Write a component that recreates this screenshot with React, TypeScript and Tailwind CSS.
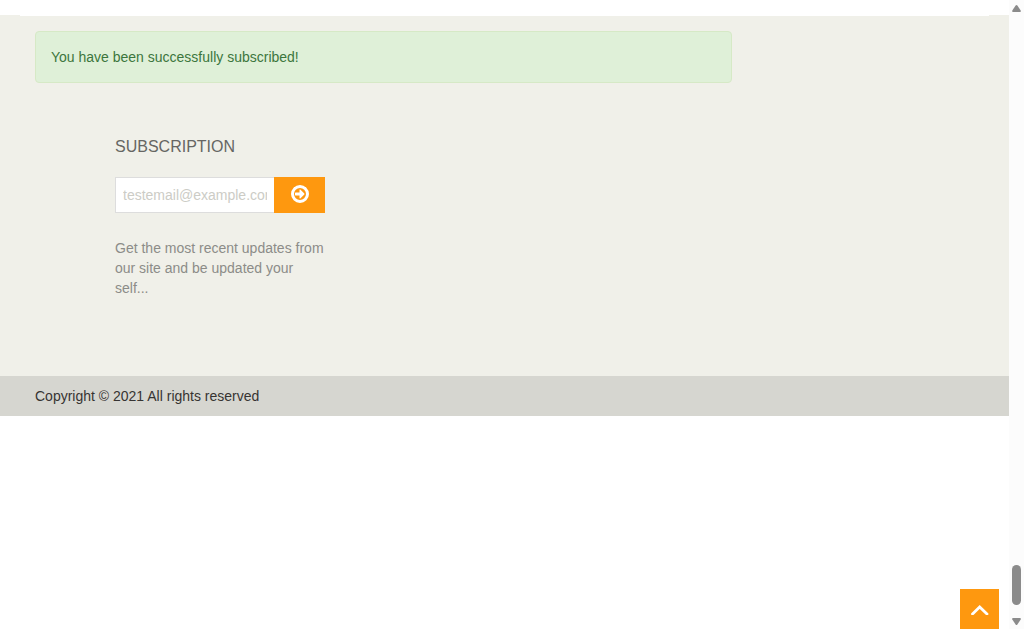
import React from "react";

function ArrowCircleIcon() {
  return (
    <svg viewBox="0 0 18 18" className="h-[18px] w-[18px]" fill="none" stroke="currentColor" aria-hidden="true">
      <circle cx="9" cy="9" r="7.5" strokeWidth="3" />
      <path d="M4.500 7.500H8.500V4.900c0-.5.5-.6.8-.3l4 3.900c.3.3.3.7 0 1l-4 3.900c-.3.3-.8.2-.8-.3V10.500H4.500c-.3 0-.5-.2-.5-.5V8c0-.3.2-.5.5-.5z" fill="currentColor" stroke="none" />
    </svg>
  );
}

function SubscriptionForm() {
  return (
    <section className="ml-20 mt-[54px] w-[210px]">
      <h2 className="text-base leading-5 text-[#666663]">SUBSCRIPTION</h2>
      <form className="mt-5 flex h-9" onSubmit={(e) => e.preventDefault()}>
        <input
          type="email"
          aria-label="Email address"
          placeholder="testemail@example.com"
          className="min-w-0 flex-1 border border-r-0 border-[#dddddd] bg-white px-[7px] text-sm text-[#555555] outline-none placeholder:text-[#ccccc6]"
        />
        <button
          type="submit"
          aria-label="Subscribe"
          className="flex w-[51px] items-center justify-center bg-[#fe980f] pb-0.5 text-white"
        >
          <ArrowCircleIcon />
        </button>
      </form>
      <p className="mt-[25px] text-sm leading-5 text-[#8c8c88]">
        Get the most recent updates from our site and be updated your self...
      </p>
    </section>
  );
}

function ScrollTrack() {
  return (
    <aside className="sticky top-0 flex h-screen w-[15px] shrink-0 flex-col items-center bg-[#fcfcfc] pb-1 pt-[5px] text-[#8b8b8b]" aria-hidden="true">
      <svg viewBox="0 0 9 7" className="h-[7px] w-[9px]" fill="currentColor">
        <path d="M3.6.5Q4.5-.5 5.4.5L8.7 5.5Q9.2 7 8 7H1Q-.2 7 .3 5.5Z" />
      </svg>
      <div className="mt-auto h-10 w-[9px] rounded-full bg-[#8b8b8b]" />
      <svg viewBox="0 0 9 7" className="mt-[13px] h-[7px] w-[9px]" fill="currentColor">
        <path d="M3.6 6.5Q4.5 7.5 5.4 6.5L8.7 1.5Q9.2 0 8 0H1Q-.2 0 .3 1.5Z" />
      </svg>
    </aside>
  );
}

export default function App() {
  return (
    <div className="flex min-h-screen bg-white font-['Liberation_Sans',Arial,sans-serif]">
      <main className="min-w-0 flex-1 pt-[15px]">
        <footer>
          <div className="bg-[#f0f0e9] pb-[78px]">
            <div className="mx-5 h-px bg-white" />
            <div className="px-[35px] pt-[15px]">
              <div
                role="status"
                className="max-w-[697px] rounded border border-[#d6e9c6] bg-[#dff0d8] p-[15px] text-sm leading-5 text-[#3c763d]"
              >
                You have been successfully subscribed!
              </div>
              <SubscriptionForm />
            </div>
          </div>
          <div className="bg-[#d6d6d0] px-[35px] py-2.5">
            <p className="text-sm leading-5 text-[#363432]">Copyright © 2021 All rights reserved</p>
          </div>
        </footer>
      </main>
      <a
        href="#root"
        aria-label="Scroll to top"
        className="fixed bottom-0 right-[25px] flex h-10 w-[39px] items-center justify-center bg-[#fe980f] text-white"
      >
        <svg viewBox="0 0 18 12" className="h-3 w-[18px]" fill="none" stroke="currentColor" strokeWidth="2.8" aria-hidden="true">
          <path d="M1.500 11 8.700 4 16 11" strokeLinecap="round" />
        </svg>
      </a>
      <ScrollTrack />
    </div>
  );
}
